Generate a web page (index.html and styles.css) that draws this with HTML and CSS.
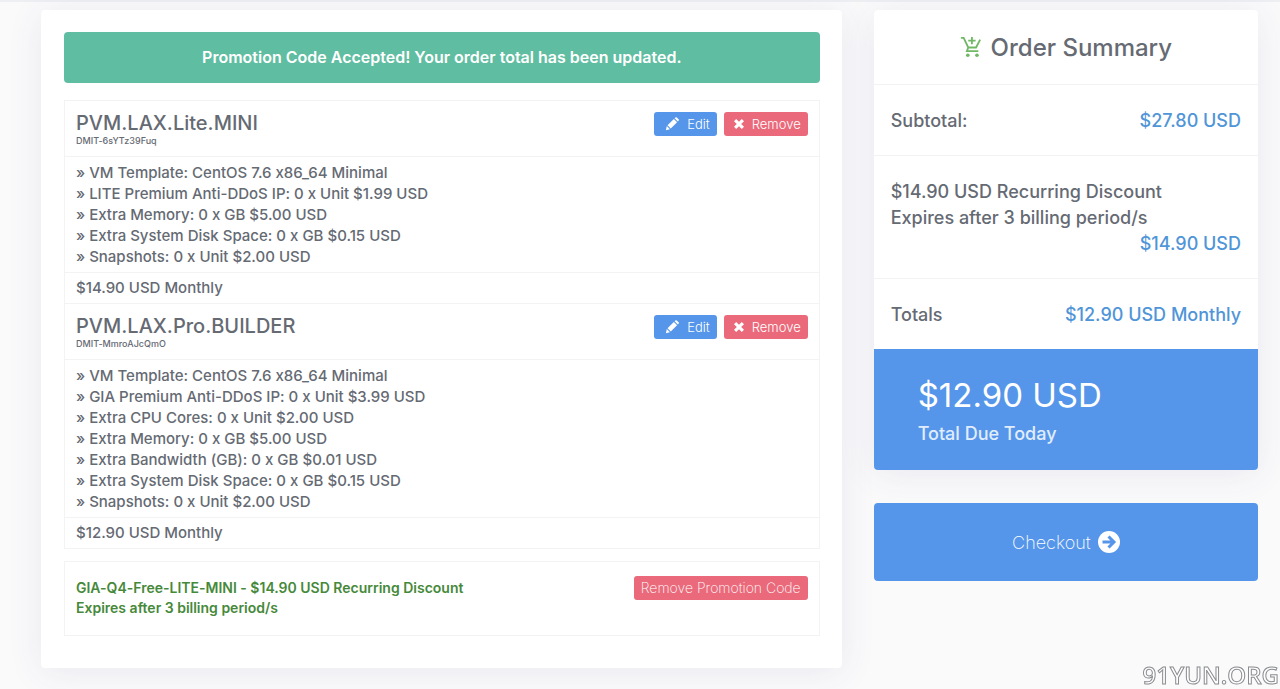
FILE: index.html
```html
<!DOCTYPE html>
<html lang="en">
<head>
  <meta charset="utf-8">
  <meta name="viewport" content="width=device-width">
  <title>Review &amp; Checkout</title>
  <link rel="stylesheet" href="styles.css">
</head>
<body>
  <svg class="sprite" aria-hidden="true">
    <symbol id="i-pencil" viewBox="0 0 16 16">
      <path d="M1 15l1.100-4.600 3.500 3.500zM2.900 9.400l7.200-7.200 3.700 3.700-7.200 7.200zM11 1.400l.800-.800a1.200 1.200 0 0 1 1.700 0l2 2a1.200 1.200 0 0 1 0 1.700l-.800.800z"/>
    </symbol>
    <symbol id="i-times" viewBox="0 0 12 12">
      <path d="M3.200 1L6 3.800 8.800 1 11 3.200 8.200 6 11 8.800 8.800 11 6 8.200 3.200 11 1 8.800 3.800 6 1 3.200z"/>
    </symbol>
  </svg>

  <div class="top-line"></div>

  <main class="page">
    <section class="card cart">
      <div class="alert" role="status">Promotion Code Accepted! Your order total has been updated.</div>

      <div class="items">
        <article class="item">
          <header class="item-head">
            <div>
              <h2 class="item-title">PVM.LAX.Lite.MINI</h2>
              <p class="item-host">DMIT-6sYTz39Fuq</p>
            </div>
            <div class="item-actions">
              <a class="btn btn-edit" href="#"><svg class="icon"><use href="#i-pencil"/></svg>Edit</a>
              <button class="btn btn-remove" type="button"><svg class="icon icon-sm"><use href="#i-times"/></svg>Remove</button>
            </div>
          </header>
          <ul class="item-options">
            <li>VM Template: CentOS 7.6 x86_64 Minimal</li>
            <li>LITE Premium Anti-DDoS IP: 0 x Unit $1.99 USD</li>
            <li>Extra Memory: 0 x GB $5.00 USD</li>
            <li>Extra System Disk Space: 0 x GB $0.15 USD</li>
            <li>Snapshots: 0 x Unit $2.00 USD</li>
          </ul>
          <p class="item-price">$14.90 USD Monthly</p>
        </article>

        <article class="item">
          <header class="item-head">
            <div>
              <h2 class="item-title">PVM.LAX.Pro.BUILDER</h2>
              <p class="item-host">DMIT-MmroAJcQmO</p>
            </div>
            <div class="item-actions">
              <a class="btn btn-edit" href="#"><svg class="icon"><use href="#i-pencil"/></svg>Edit</a>
              <button class="btn btn-remove" type="button"><svg class="icon icon-sm"><use href="#i-times"/></svg>Remove</button>
            </div>
          </header>
          <ul class="item-options">
            <li>VM Template: CentOS 7.6 x86_64 Minimal</li>
            <li>GIA Premium Anti-DDoS IP: 0 x Unit $3.99 USD</li>
            <li>Extra CPU Cores: 0 x Unit $2.00 USD</li>
            <li>Extra Memory: 0 x GB $5.00 USD</li>
            <li>Extra Bandwidth (GB): 0 x GB $0.01 USD</li>
            <li>Extra System Disk Space: 0 x GB $0.15 USD</li>
            <li>Snapshots: 0 x Unit $2.00 USD</li>
          </ul>
          <p class="item-price">$12.90 USD Monthly</p>
        </article>
      </div>

      <div class="promo">
        <p class="promo-text">GIA-Q4-Free-LITE-MINI - $14.90 USD Recurring Discount<br>Expires after 3 billing period/s</p>
        <button class="btn btn-promo" type="button">Remove Promotion Code</button>
      </div>
    </section>

    <aside class="side">
      <section class="card summary">
        <h2 class="summary-title">
          <svg class="cart-icon" viewBox="0 0 24 24" aria-hidden="true">
            <path d="M1 2h3l5 10.500h8.500L22 4M9 12.500L7.500 16.500H20M13 1v8M9 5h8"/>
            <circle cx="8.500" cy="21" r="2"/>
            <circle cx="18.500" cy="21" r="2"/>
          </svg>
          Order Summary
        </h2>
        <dl class="summary-list">
          <div class="summary-row">
            <dt>Subtotal:</dt>
            <dd>$27.80 USD</dd>
          </div>
          <div class="summary-row summary-row-wrap">
            <dt>$14.90 USD Recurring Discount<br>Expires after 3 billing period/s</dt>
            <dd>$14.90 USD</dd>
          </div>
          <div class="summary-row">
            <dt>Totals</dt>
            <dd>$12.90 USD Monthly</dd>
          </div>
        </dl>
        <div class="due">
          <p class="due-amount">$12.90 USD</p>
          <p class="due-label">Total Due Today</p>
        </div>
      </section>

      <button class="checkout" type="button">
        Checkout
        <svg class="checkout-icon" viewBox="0 0 22 22" aria-hidden="true">
          <circle cx="11" cy="11" r="11"/>
          <path d="M4.500 11h11M10.500 5.500L16 11l-5.500 5.500"/>
        </svg>
      </button>
    </aside>
  </main>

  <div class="watermark">91YUN.ORG</div>
</body>
</html>
```
FILE: styles.css
```css
* {box-sizing:border-box;}

body {
	margin:0;
	background:#fafafb;
	color:#656a73;
	font-family: Inter, "Liberation Sans", sans-serif;
	font-size:15px;
	font-weight:500;
	/* keeps the x in x86_64 a letter */
	font-feature-settings:"calt" 0;
}
h2, p, ul, dl, dd {margin:0; padding:0;}
ul {list-style:none;}
button {border:0; font-family:inherit; cursor:pointer;}
.sprite {display:none;}

.top-line {height:2px; background:#eeeff3;}

.page {
	display:grid;
	grid-template-columns: 25fr 12fr;
	align-items:start;
	gap:32px;
	padding:8px 22px 22px 41px;
}

.card {
	background:#fff;
	border-radius:4px;
	box-shadow: 0 4px 36px rgba(70,70,130,.09);
}

/* cart */
.cart {padding:22px 22px 32px 23px;}

.alert {
	padding:13px;
	border-radius:4px;
	background:#5fbda1;
	color:#fff;
	font-size:16px;
	font-weight:600;
	line-height:25px;
	text-align:center;
}

.items {
	margin-top:17px;
	border:1px solid #f3f3f5;
	border-top:0;
}
.item-head {
	display:flex;
	justify-content:space-between;
	align-items:flex-start;
	padding:11px 11px 8px;
	border-top:1px solid #f3f3f5;
}
.item-title {
	font-size:20px;
	font-weight:500;
	line-height:22px;
}
.item-host {
	font-size:9px;
	line-height:14px;
}
.item-actions {display:flex; gap:7px;}

.btn {
	display:flex;
	align-items:center;
	justify-content:center;
	height:24px;
	padding:0 7px;
	border-radius:3px;
	color:#fff;
	font-size:13px;
	font-weight:300;
	line-height:24px;
	text-decoration:none;
}
.btn-edit {padding-left:11px; background:#5596ea;}
.btn-remove {padding-left:9px; background:#ea6a7b;}
.btn-promo {
	background:#ea6a7b;
	font-size:14px;
	font-weight:200;
}
.icon {width:14px; height:14px; margin-right:8px; fill:#fff;}
.icon-sm {width:12px; height:12px; margin-right:7px;}

.item-options {
	padding:5px 11px;
	border-top:1px solid #f3f3f5;
	line-height:21px;
}
.item-options li::before {content:"» ";}
.item-price {
	padding:3px 11px;
	border-top:1px solid #f3f3f5;
	line-height:24px;
}

.promo {
	display:flex;
	justify-content:space-between;
	align-items:flex-start;
	margin-top:12px;
	padding:14px 11px 17px;
	border:1px solid #f3f3f5;
}
.promo-text {
	color:#46893a;
	font-size:14px;
	font-weight:600;
	line-height:20px;
	padding-top:2px;
}

/* summary */
.side {display:grid; gap:33px;}

.summary-title {
	display:flex;
	align-items:center;
	justify-content:center;
	gap:9px;
	height:74px;
	font-size:24px;
	font-weight:500;
}
.cart-icon {
	width:22px;
	height:22px;
	fill:none;
	stroke:#71b866;
	stroke-width:2;
}
.cart-icon circle {fill:#71b866; stroke:none;}

.summary-row {
	display:flex;
	justify-content:space-between;
	padding:23px 17px 21px;
	border-top:1px solid #f3f3f5;
	font-size:18px;
	line-height:26px;
}
.summary-row dd {color:#5095d8;}
.summary-row-wrap {display:block;}
.summary-row-wrap dd {text-align:right;}

.due {
	padding:23px 44px 21px;
	border-radius:0 0 4px 4px;
	background:#5596ea;
	color:#fff;
}
.due-amount {
	font-size:33px;
	font-weight:400;
	line-height:47px;
}
.due-label {
	color:#e1edfc;
	font-size:18px;
	line-height:30px;
}

.checkout {
	display:flex;
	align-items:center;
	justify-content:center;
	gap:7px;
	height:78px;
	border-radius:4px;
	background:#5596ea;
	color:#fff;
	font-size:18px;
	font-weight:200;
}
.checkout-icon {width:22px; height:22px;}
.checkout-icon circle {fill:#fff;}
.checkout-icon path {fill:none; stroke:#5596ea; stroke-width:3;}

.watermark {
	position:fixed;
	right:1px;
	bottom:0;
	color:#fff;
	font-family:"Open Sans", sans-serif;
	font-size:24px;
	font-weight:600;
	line-height:28px;
	-webkit-text-stroke:1px #8a8c90;
}
```
